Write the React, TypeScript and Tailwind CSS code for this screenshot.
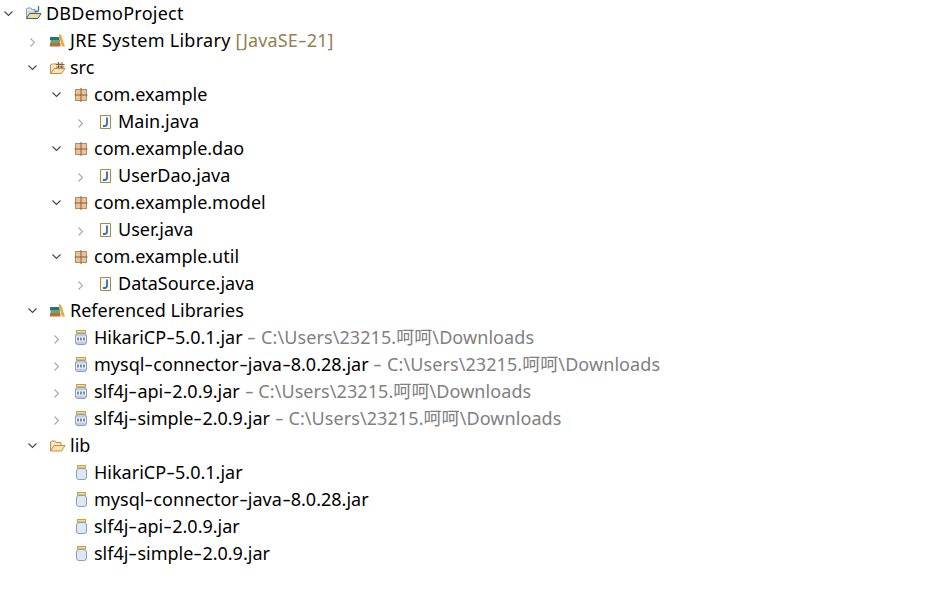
import React from "react";

type Kind = "project" | "lib" | "srcfolder" | "pkg" | "java" | "refjar" | "folder" | "jar";
type Row = { depth: 0 | 1 | 2 | 3; arrow?: "open" | "closed"; icon: Kind; text: string; deco?: string; decoClass?: string; textClass?: string };

const dl = " - C:\\Users\\23215.呵呵\\Downloads";
const gray = "text-[#808080] tracking-[0.08px]";

const rows: Row[] = [
  { depth: 0, arrow: "open", icon: "project", text: "DBDemoProject", textClass: "tracking-[0.23px]" },
  { depth: 1, arrow: "closed", icon: "lib", text: "JRE System Library", textClass: "tracking-[0.28px]", deco: " [JavaSE-21]", decoClass: "text-[#95804f] tracking-[0.1px]" },
  { depth: 1, arrow: "open", icon: "srcfolder", text: "src" },
  { depth: 2, arrow: "open", icon: "pkg", text: "com.example" },
  { depth: 3, arrow: "closed", icon: "java", text: "Main.java" },
  { depth: 2, arrow: "open", icon: "pkg", text: "com.example.dao" },
  { depth: 3, arrow: "closed", icon: "java", text: "UserDao.java" },
  { depth: 2, arrow: "open", icon: "pkg", text: "com.example.model" },
  { depth: 3, arrow: "closed", icon: "java", text: "User.java" },
  { depth: 2, arrow: "open", icon: "pkg", text: "com.example.util" },
  { depth: 3, arrow: "closed", icon: "java", text: "DataSource.java" },
  { depth: 1, arrow: "open", icon: "lib", text: "Referenced Libraries" },
  { depth: 2, arrow: "closed", icon: "refjar", text: "HikariCP-5.0.1.jar", deco: dl, decoClass: gray },
  { depth: 2, arrow: "closed", icon: "refjar", text: "mysql-connector-java-8.0.28.jar", deco: dl, decoClass: gray },
  { depth: 2, arrow: "closed", icon: "refjar", text: "slf4j-api-2.0.9.jar", deco: dl, decoClass: gray },
  { depth: 2, arrow: "closed", icon: "refjar", text: "slf4j-simple-2.0.9.jar", deco: dl, decoClass: gray },
  { depth: 1, arrow: "open", icon: "folder", text: "lib" },
  { depth: 2, icon: "jar", text: "HikariCP-5.0.1.jar" },
  { depth: 2, icon: "jar", text: "mysql-connector-java-8.0.28.jar" },
  { depth: 2, icon: "jar", text: "slf4j-api-2.0.9.jar" },
  { depth: 2, icon: "jar", text: "slf4j-simple-2.0.9.jar" },
];

const indent = { 0: "pl-0", 1: "pl-6", 2: "pl-12", 3: "pl-18" } as const;

// The reference face has a hyphen about 3px wider than Noto Sans.
function Label({ value }: { value: string }) {
  const parts = value.split("-");
  return (
    <>
      {parts.map((p, i) => (
        <React.Fragment key={i}>
          {p}
          {i < parts.length - 1 && <span className="inline-block w-[9px] text-center scale-x-150">-</span>}
        </React.Fragment>
      ))}
    </>
  );
}

function Arrow({ kind }: { kind: "open" | "closed" }) {
  return (
    <svg width="16" height="16" viewBox="0 0 16 16" fill="none">
      {kind === "open" ? (
        <path d="M4.5 5.5 L8.5 9.5 L12.5 5.5" stroke="#46464a" strokeWidth="1.1" />
      ) : (
        <path d="M6.5 5.5 L10.5 9.5 L6.5 13.5" stroke="#a8a8a8" strokeWidth="1.1" />
      )}
    </svg>
  );
}

function OpenFolder() {
  return (
    <>
      <path d="M2.5 13 V4 L3.5 3 H7 L8 4.5 H13 V7" fill="#f7e7c2" stroke="#c08d4e" />
      <path d="M2.5 13 L6 7.5 H17 L13.5 13 Z" fill="#fbe3ad" stroke="#c08d4e" />
    </>
  );
}

function Icon({ kind }: { kind: Kind }) {
  const svg = (c: React.ReactNode) => (
    <svg width="18" height="16" viewBox="0 0 18 16" fill="none">{c}</svg>
  );
  switch (kind) {
    case "project":
      return svg(
        <>
          <path d="M2.5 12.5 V3 L3.5 2 H7 L8 3.5 H11 V7" fill="#dbe6f4" stroke="#7d9cc4" />
          <path d="M3.5 6.5 H13" stroke="#e8cf8a" strokeWidth="2" />
          <path d="M2.5 12.5 L5.5 7.5 H17 L14 12.5 Z" fill="#f6dc8e" stroke="#2f63ad" />
          <path d="M14.5 0 V4 Q14.5 5.5 12.5 5.5 H10.5" stroke="#3a6ea5" strokeWidth="1.3" />
        </>
      );
    case "lib":
      return svg(
        <>
          <rect x="2" y="4" width="9.5" height="3" fill="#2a6f88" />
          <rect x="2.5" y="7" width="9.5" height="3" fill="#5fae68" />
          <rect x="2" y="10" width="10.5" height="3.5" fill="#bb6d42" />
          <path d="M10.5 1.5 L13 1.5 L17 13.5 L14 13.5 Z" fill="#eaa93f" />
        </>
      );
    case "srcfolder":
      return svg(
        <>
          <path d="M2.5 13.5 V5 L3.5 4 H13 V8" fill="#f7e7c2" stroke="#c08d4e" />
          <path d="M8 4.5 H16.5 M8 7 H16.5 M10.5 2 V8 M14 2 V8" stroke="#8a5a3c" strokeWidth="1" />
          <path d="M2.5 13.5 L6 8.5 H17 L13.5 13.5 Z" fill="#fbe3ad" stroke="#c08d4e" />
        </>
      );
    case "folder":
      return svg(<OpenFolder />);
    case "pkg":
      return svg(
        <>
          <rect x="3.5" y="2.5" width="11" height="11" fill="#e8c49a" stroke="#b88a62" />
          <path d="M9 1 V15 M2.5 8 H15.5" stroke="#8f5a46" strokeWidth="1" />
        </>
      );
    case "java":
      return svg(
        <>
          <path d="M4.5 1.5 H14.5 V14.5 H4.5 Z" fill="#fdfbf0" stroke="#a5894f" />
          <path d="M11 3.5 V9.5 Q11 12 8.5 12 H7" stroke="#2f6fb3" strokeWidth="1.8" />
        </>
      );
    case "refjar":
      return svg(
        <>
          <rect x="4.5" y="0.5" width="9" height="2.5" fill="#f2dc8e" stroke="#c6a23e" />
          <rect x="3.5" y="3.5" width="11" height="11" rx="2.5" fill="#bccde4" stroke="#8b9dba" />
          <rect x="4" y="6.5" width="10" height="5" fill="#f4f6fa" />
          <path d="M6 7.5 V10.5 M9 7.5 V10.5 M12 7.5 V10.5" stroke="#3d5f8f" strokeWidth="1.4" />
        </>
      );
    case "jar":
      return svg(
        <>
          <rect x="5.5" y="0.5" width="8" height="2.5" fill="#f2dc8e" stroke="#c6a23e" />
          <rect x="4.5" y="3.5" width="10" height="11" rx="2.5" fill="#dde8f5" stroke="#8b9dba" />
        </>
      );
  }
}

export default function App() {
  return (
    <div className="w-[948px] h-[592px] bg-white overflow-hidden font-['Noto_Sans','Noto_Sans_CJK_SC',sans-serif] text-[18px] text-black">
      {rows.map((r, i) => (
        <div key={i} className={`flex items-center h-[27px] whitespace-pre ${indent[r.depth]}`}>
          <span className="w-6 h-4 flex">{r.arrow && <Arrow kind={r.arrow} />}</span>
          <span className="w-[22px] h-4 flex"><Icon kind={r.icon} /></span>
          <span className={r.textClass}><Label value={r.text} /></span>
          {r.deco && <span className={r.decoClass}><Label value={r.deco} /></span>}
        </div>
      ))}
    </div>
  );
}
